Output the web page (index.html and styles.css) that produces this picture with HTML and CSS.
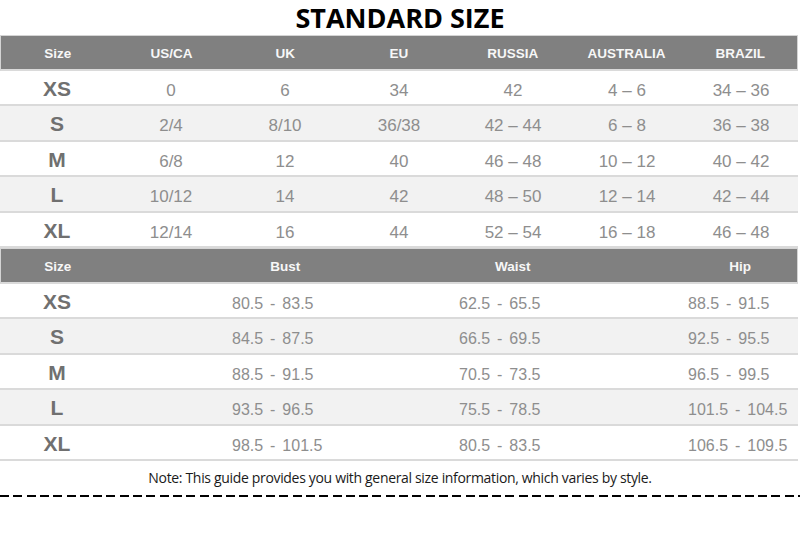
FILE: index.html
```html
<!DOCTYPE html>
<html lang="en">
<head>
<meta charset="utf-8">
<title>Standard Size</title>
<link rel="stylesheet" href="styles.css">
</head>
<body>
<div class="page">
  <h1 class="title">STANDARD SIZE</h1>
  <div class="chart">
    <div class="row head">
      <div>Size</div><div>US/CA</div><div>UK</div><div>EU</div><div>RUSSIA</div><div>AUSTRALIA</div><div>BRAZIL</div>
    </div>
    <div class="row">
      <div class="sz">XS</div><div>0</div><div>6</div><div>34</div><div>42</div><div>4 – 6</div><div>34 – 36</div>
    </div>
    <div class="row alt">
      <div class="sz">S</div><div>2/4</div><div>8/10</div><div>36/38</div><div>42 – 44</div><div>6 – 8</div><div>36 – 38</div>
    </div>
    <div class="row">
      <div class="sz">M</div><div>6/8</div><div>12</div><div>40</div><div>46 – 48</div><div>10 – 12</div><div>40 – 42</div>
    </div>
    <div class="row alt">
      <div class="sz">L</div><div>10/12</div><div>14</div><div>42</div><div>48 – 50</div><div>12 – 14</div><div>42 – 44</div>
    </div>
    <div class="row">
      <div class="sz">XL</div><div>12/14</div><div>16</div><div>44</div><div>52 – 54</div><div>16 – 18</div><div>46 – 48</div>
    </div>

    <div class="row head second">
      <div>Size</div><div class="bust">Bust</div><div class="waist">Waist</div><div class="hip">Hip</div>
    </div>
    <div class="row body">
      <div class="sz">XS</div><div class="bust">80.5 - 83.5</div><div class="waist">62.5 - 65.5</div><div class="hip">88.5 - 91.5</div>
    </div>
    <div class="row body alt">
      <div class="sz">S</div><div class="bust">84.5 - 87.5</div><div class="waist">66.5 - 69.5</div><div class="hip">92.5 - 95.5</div>
    </div>
    <div class="row body">
      <div class="sz">M</div><div class="bust">88.5 - 91.5</div><div class="waist">70.5 - 73.5</div><div class="hip">96.5 - 99.5</div>
    </div>
    <div class="row body alt">
      <div class="sz">L</div><div class="bust">93.5 - 96.5</div><div class="waist">75.5 - 78.5</div><div class="hip">101.5 - 104.5</div>
    </div>
    <div class="row body">
      <div class="sz">XL</div><div class="bust">98.5 - 101.5</div><div class="waist">80.5 - 83.5</div><div class="hip">106.5 - 109.5</div>
    </div>
  </div>
  <p class="note">Note: This guide provides you with general size information, which varies by style.</p>
  <div class="dash"></div>
</div>
</body>
</html>
```

FILE: styles.css
```css
* { box-sizing: border-box; }

html, body {
  margin: 0;
  padding: 0;
  background: #ffffff;
}

.page {
  width: 800px;
}

.title {
  margin: 0;
  height: 35px;
  line-height: 35px;
  text-align: center;
  font-family: "Open Sans", "Noto Sans", sans-serif;
  font-weight: 700;
  font-size: 27px;
  color: #000;
}

.chart {
  width: 798px;
  font-family: "Liberation Sans", Arial, sans-serif;
}

.row {
  display: grid;
  grid-template-columns: repeat(7, 1fr);
  height: 35.5px;
  align-items: center;
  text-align: center;
  border-bottom: 2px solid #dadada;
  padding-top: 3px;
  font-size: 17px;
  color: #8e8e8e;
  background: #ffffff;
}

.row:not(.head) > div:not(.sz) {
  padding-top: 4px;
}

.row.alt {
  background: #f2f2f2;
}

.row.head {
  background: #808080;
  color: #f7f7f7;
  font-weight: 700;
  font-size: 13.5px;
  border: 1px solid #d4d4d4;
  border-bottom: 2px solid #dadada;
  padding-top: 2px;
}

.row .sz {
  font-weight: 700;
  font-size: 21px;
  color: #707070;
}

.row .bust { grid-column: 2 / 5; }
.row .waist { grid-column: 5 / 6; }
.row .hip { grid-column: 7 / 8; }

.row.body {
  font-size: 16px;
  word-spacing: 2.5px;
}

.row.body .bust {
  text-align: left;
  padding-left: 118px;
}

.row.body .waist {
  grid-column: 5 / 7;
  text-align: left;
  padding-left: 3px;
}

.row.body .hip {
  text-align: left;
  padding-left: 4px;
  white-space: nowrap;
}

.note {
  margin: 0;
  height: 34px;
  line-height: 34px;
  text-align: center;
  font-family: "Open Sans", "Noto Sans", sans-serif;
  font-size: 14px;
  letter-spacing: -0.33px;
  color: #1a1a1a;
}

.dash {
  height: 2px;
  width: 800px;
  background: repeating-linear-gradient(90deg, #000 0, #000 9px, transparent 9px, transparent 13.3px);
}
```
